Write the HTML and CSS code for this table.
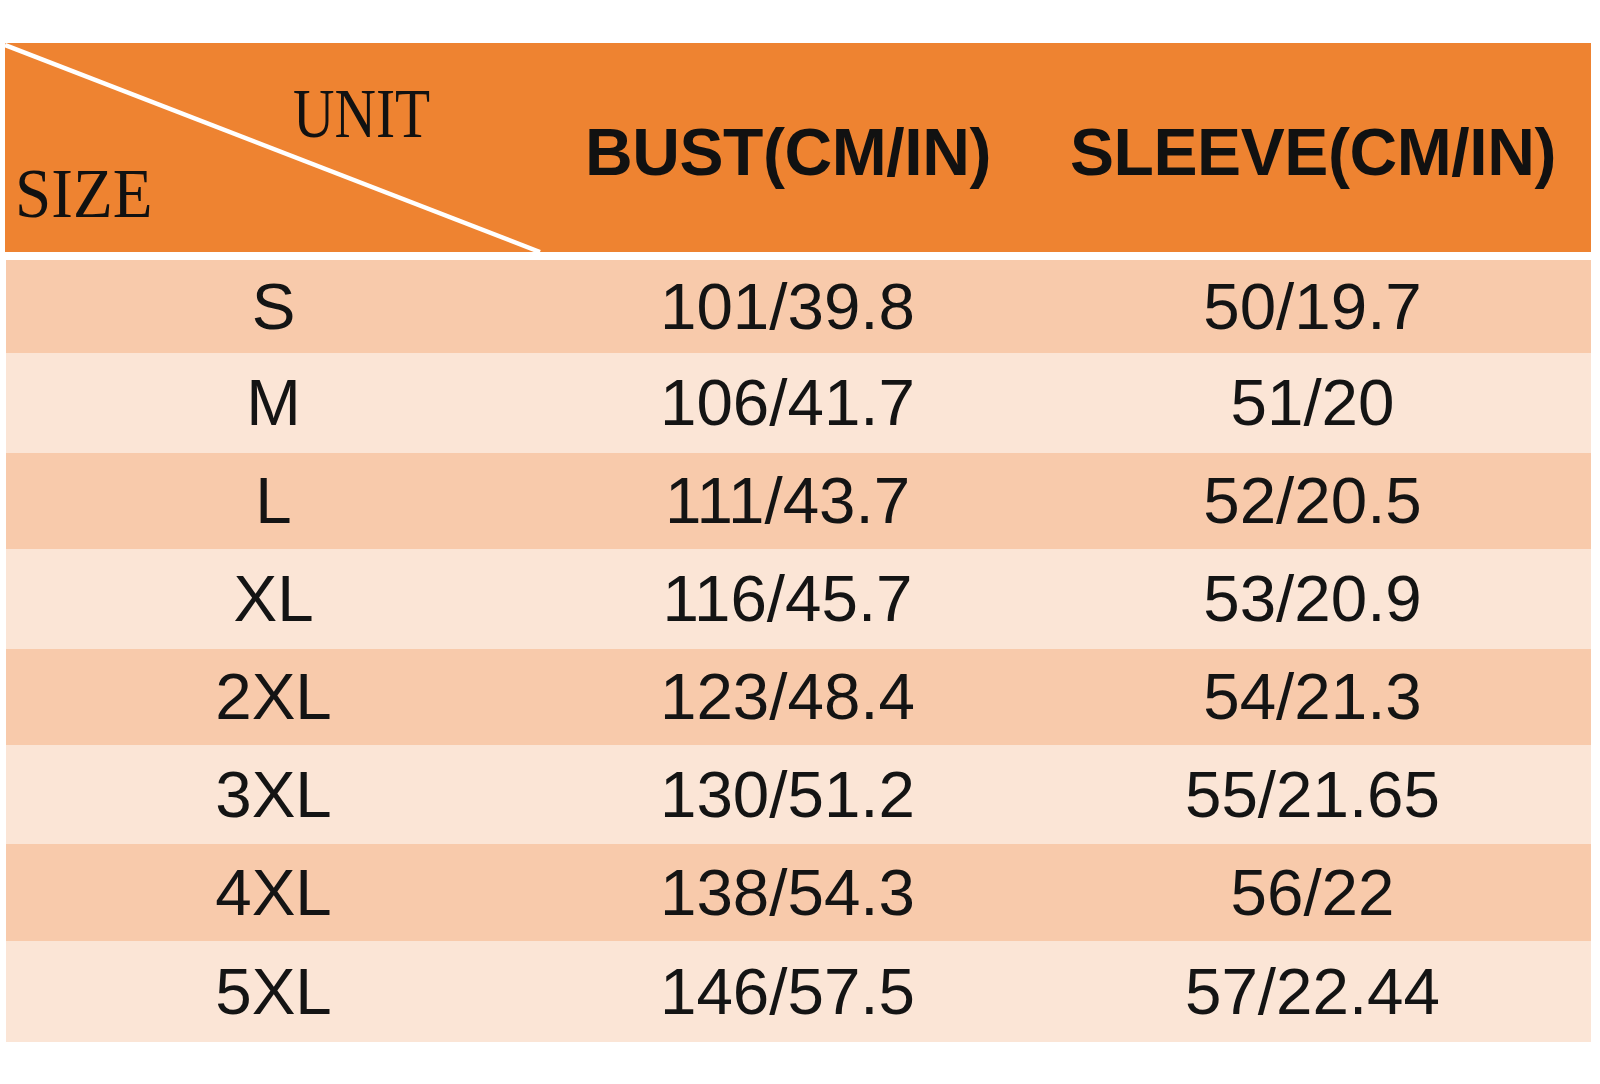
FILE: index.html
```html
<!DOCTYPE html>
<html>
<head>
<meta charset="utf-8">
<link rel="stylesheet" href="styles.css">
</head>
<body>
<div class="chart">
  <div class="head">
    <div class="corner">
      <svg class="diag" width="536" height="209" viewBox="0 0 536 209"><line x1="0" y1="2" x2="535" y2="209" stroke="#fff" stroke-width="4.5"/></svg>
      <span class="unit">UNIT</span>
      <span class="size">SIZE</span>
    </div>
    <div class="hcell">BUST(CM/IN)</div>
    <div class="hcell">SLEEVE(CM/IN)</div>
  </div>
  <div class="rows">
    <div class="row dark h93"><span>S</span><span>101/39.8</span><span>50/19.7</span></div>
    <div class="row light h100"><span>M</span><span>106/41.7</span><span>51/20</span></div>
    <div class="row dark h96"><span>L</span><span>111/43.7</span><span>52/20.5</span></div>
    <div class="row light h100"><span>XL</span><span>116/45.7</span><span>53/20.9</span></div>
    <div class="row dark h96"><span>2XL</span><span>123/48.4</span><span>54/21.3</span></div>
    <div class="row light h99"><span>3XL</span><span>130/51.2</span><span>55/21.65</span></div>
    <div class="row dark h97"><span>4XL</span><span>138/54.3</span><span>56/22</span></div>
    <div class="row light h101"><span>5XL</span><span>146/57.5</span><span>57/22.44</span></div>
  </div>
</div>
</body>
</html>
```
FILE: styles.css
```css
html, body {
  margin: 0;
  padding: 0;
  background: #fff;
}
.chart {
  padding: 43px 0 0 5px;
  width: 1586px;
}
.head {
  display: grid;
  grid-template-columns: 536px 494px 556px;
  height: 209px;
  background: #ee8331;
}
.corner {
  position: relative;
  display: flex;
  flex-direction: column;
  font-family: "Liberation Serif", "Times New Roman", serif;
  font-size: 70px;
  line-height: 1;
  color: #111;
}
.diag {
  position: absolute;
  left: 0;
  top: 0;
}
.unit {
  display: block;
  margin: 36px 0 0 288px;
  transform: scaleX(0.82);
  transform-origin: left center;
}
.size {
  display: block;
  margin: 10px 0 0 10px;
  transform: scaleX(0.93);
  transform-origin: left center;
}
.hcell {
  display: flex;
  align-items: center;
  justify-content: center;
  padding-top: 8px;
  font-family: "Liberation Sans", Arial, sans-serif;
  font-weight: bold;
  font-size: 66px;
  line-height: 1;
  color: #111;
  letter-spacing: -0.4px;
}
.rows {
  margin-top: 8px;
  margin-left: 1px;
  width: 1585px;
}
.row {
  display: grid;
  grid-template-columns: 535px 493px 557px;
  align-items: center;
  font-family: "Liberation Sans", Arial, sans-serif;
  font-size: 65.5px;
  line-height: 1;
  color: #141414;
}
.row span {
  text-align: center;
}
.dark { background: #f8caab; }
.light { background: #fbe5d6; }
.h93 { height: 93px; }
.h96 { height: 96px; }
.h97 { height: 97px; }
.h99 { height: 99px; }
.h100 { height: 100px; }
.h101 { height: 101px; }
```
